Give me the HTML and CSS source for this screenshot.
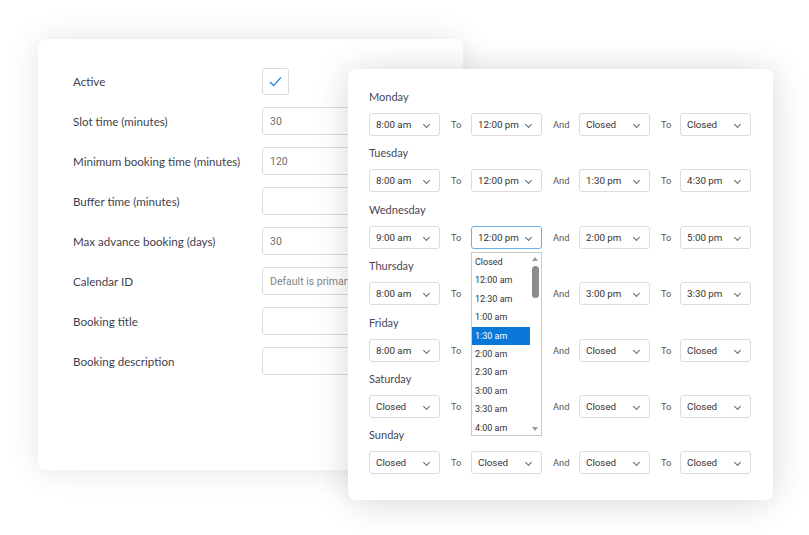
FILE: index.html
```html
<!DOCTYPE html>
<html>
<head>
<meta charset="utf-8">
<link rel="stylesheet" href="styles.css">
</head>
<body>
<div class="stage">
  <div class="card card-settings">
    <div class="row"><span class="lbl">Active</span><span class="check"><svg width="13" height="11" viewBox="0 0 13 11"><path d="M1 6 L4.6 9.6 L12 1.4" fill="none" stroke="#2a86e2" stroke-width="1.4"/></svg></span></div>
    <div class="row"><span class="lbl">Slot time (minutes)</span><span class="inp">30</span></div>
    <div class="row"><span class="lbl">Minimum booking time (minutes)</span><span class="inp">120</span></div>
    <div class="row"><span class="lbl">Buffer time (minutes)</span><span class="inp"></span></div>
    <div class="row"><span class="lbl">Max advance booking (days)</span><span class="inp">30</span></div>
    <div class="row"><span class="lbl">Calendar ID</span><span class="inp ph">Default is primary</span></div>
    <div class="row"><span class="lbl">Booking title</span><span class="inp"></span></div>
    <div class="row"><span class="lbl">Booking description</span><span class="inp"></span></div>
  </div>

  <div class="card card-hours">
    <div class="day">
      <div class="dname">Monday</div>
      <div class="line">
        <div class="sel">8:00 am</div><span class="conn">To</span><div class="sel">12:00 pm</div><span class="conn">And</span><div class="sel">Closed</div><span class="conn">To</span><div class="sel">Closed</div>
      </div>
    </div>
    <div class="day">
      <div class="dname">Tuesday</div>
      <div class="line">
        <div class="sel">8:00 am</div><span class="conn">To</span><div class="sel">12:00 pm</div><span class="conn">And</span><div class="sel">1:30 pm</div><span class="conn">To</span><div class="sel">4:30 pm</div>
      </div>
    </div>
    <div class="day">
      <div class="dname">Wednesday</div>
      <div class="line">
        <div class="sel">9:00 am</div><span class="conn">To</span><div class="sel focus">12:00 pm</div><span class="conn">And</span><div class="sel">2:00 pm</div><span class="conn">To</span><div class="sel">5:00 pm</div>
      </div>
    </div>
    <div class="day">
      <div class="dname">Thursday</div>
      <div class="line">
        <div class="sel">8:00 am</div><span class="conn">To</span><div class="sel covered"></div><span class="conn">And</span><div class="sel">3:00 pm</div><span class="conn">To</span><div class="sel">3:30 pm</div>
      </div>
    </div>
    <div class="day">
      <div class="dname">Friday</div>
      <div class="line">
        <div class="sel">8:00 am</div><span class="conn">To</span><div class="sel covered"></div><span class="conn">And</span><div class="sel">Closed</div><span class="conn">To</span><div class="sel">Closed</div>
      </div>
    </div>
    <div class="day">
      <div class="dname">Saturday</div>
      <div class="line">
        <div class="sel">Closed</div><span class="conn">To</span><div class="sel covered"></div><span class="conn">And</span><div class="sel">Closed</div><span class="conn">To</span><div class="sel">Closed</div>
      </div>
    </div>
    <div class="day">
      <div class="dname">Sunday</div>
      <div class="line">
        <div class="sel">Closed</div><span class="conn">To</span><div class="sel">Closed</div><span class="conn">And</span><div class="sel">Closed</div><span class="conn">To</span><div class="sel">Closed</div>
      </div>
    </div>

    <div class="dropdown">
      <ul class="opts">
        <li>Closed</li>
        <li>12:00 am</li>
        <li>12:30 am</li>
        <li>1:00 am</li>
        <li class="hl">1:30 am</li>
        <li>2:00 am</li>
        <li>2:30 am</li>
        <li>3:00 am</li>
        <li>3:30 am</li>
        <li>4:00 am</li>
      </ul>
      <div class="sbar">
        <span class="arr up"></span>
        <span class="thumb"></span>
        <span class="arr down"></span>
      </div>
    </div>
  </div>
</div>
</body>
</html>
```

FILE: styles.css
```css
html, body {
  margin: 0;
  padding: 0;
  background: #ffffff;
}
.stage {
  position: relative;
  width: 809px;
  height: 535px;
  overflow: hidden;
}
.card {
  position: absolute;
  box-sizing: border-box;
  width: 425px;
  height: 431px;
  background: #fff;
  border-radius: 8px;
}
.card-settings {
  left: 38px;
  top: 39px;
  padding: 22px 0 0 35px;
  box-shadow: 0 0 32px rgba(0,0,0,0.11);
}
.card-hours {
  left: 348px;
  top: 69px;
  padding: 20px 21px 0 21px;
  box-shadow: 0 2px 34px rgba(0,0,0,0.16);
}
.row {
  display: flex;
  align-items: center;
  height: 40px;
}
.lbl {
  width: 189px;
  flex: none;
  font-family: "Lato", "Noto Sans", sans-serif;
  font-size: 11.6px;
  color: #42424d;
}
.check {
  box-sizing: border-box;
  width: 27px;
  height: 27px;
  border: 1px solid #dadada;
  border-radius: 3px;
  display: flex;
  align-items: center;
  justify-content: center;
}
.check svg { margin-top: 1px; }
.inp {
  box-sizing: border-box;
  width: 150px;
  height: 28px;
  border: 1px solid #dcdcdc;
  border-radius: 3px;
  padding-left: 7px;
  display: flex;
  align-items: center;
  font-family: "Roboto", "Liberation Sans", sans-serif;
  font-size: 10.5px;
  color: #6f6f6f;
}
.inp.ph { color: #858585; white-space: nowrap; overflow: hidden; }

.day {
  height: 56.4px;
}
.dname {
  height: 16px;
  line-height: 16px;
  margin-bottom: 8px;
  font-family: "Lato", "Noto Sans", sans-serif;
  font-size: 11px;
  color: #474753;
}
.line {
  display: grid;
  grid-template-columns: 71px 31px 71px 37px 71px 30px 71px;
  align-items: center;
  height: 23px;
}
.sel {
  position: relative;
  box-sizing: border-box;
  height: 23px;
  border: 1px solid #dcdcdc;
  border-radius: 3px;
  padding-left: 6px;
  display: flex;
  align-items: center;
  font-family: "Roboto", "Liberation Sans", sans-serif;
  font-size: 9.8px;
  color: #333;
}
.sel::after {
  content: "";
  position: absolute;
  right: 10px;
  top: 8px;
  width: 4px;
  height: 4px;
  border-right: 1px solid #666;
  border-bottom: 1px solid #666;
  transform: rotate(45deg);
}
.sel.focus {
  border-color: #6aaee8;
}
.conn {
  padding-left: 11px;
  font-family: "Roboto", "Liberation Sans", sans-serif;
  font-size: 9.3px;
  color: #555;
}
.dropdown {
  position: absolute;
  left: 123px;
  top: 183px;
  box-sizing: border-box;
  width: 71px;
  height: 184px;
  background: #fff;
  border: 1px solid #c9c9c9;
  display: flex;
  z-index: 2;
}
.opts {
  list-style: none;
  margin: 0;
  padding: 0;
  flex: 1;
}
.opts li {
  height: 18.4px;
  line-height: 18.4px;
  padding-left: 3px;
  font-family: "Roboto", "Liberation Sans", sans-serif;
  font-size: 9px;
  color: #333;
}
.opts li.hl {
  background: #0a78d8;
  color: #fff;
}
.sbar {
  position: relative;
  width: 11px;
  flex: none;
}
.thumb {
  position: absolute;
  left: 2px;
  top: 13px;
  width: 7px;
  height: 32px;
  border-radius: 4px;
  background: #8c8c8c;
}
.arr {
  position: absolute;
  left: 2px;
  width: 0;
  height: 0;
  border-left: 3.5px solid transparent;
  border-right: 3.5px solid transparent;
}
.arr.up {
  top: 4px;
  border-bottom: 4px solid #9a9a9a;
}
.arr.down {
  bottom: 4px;
  border-top: 4px solid #9a9a9a;
}
```
